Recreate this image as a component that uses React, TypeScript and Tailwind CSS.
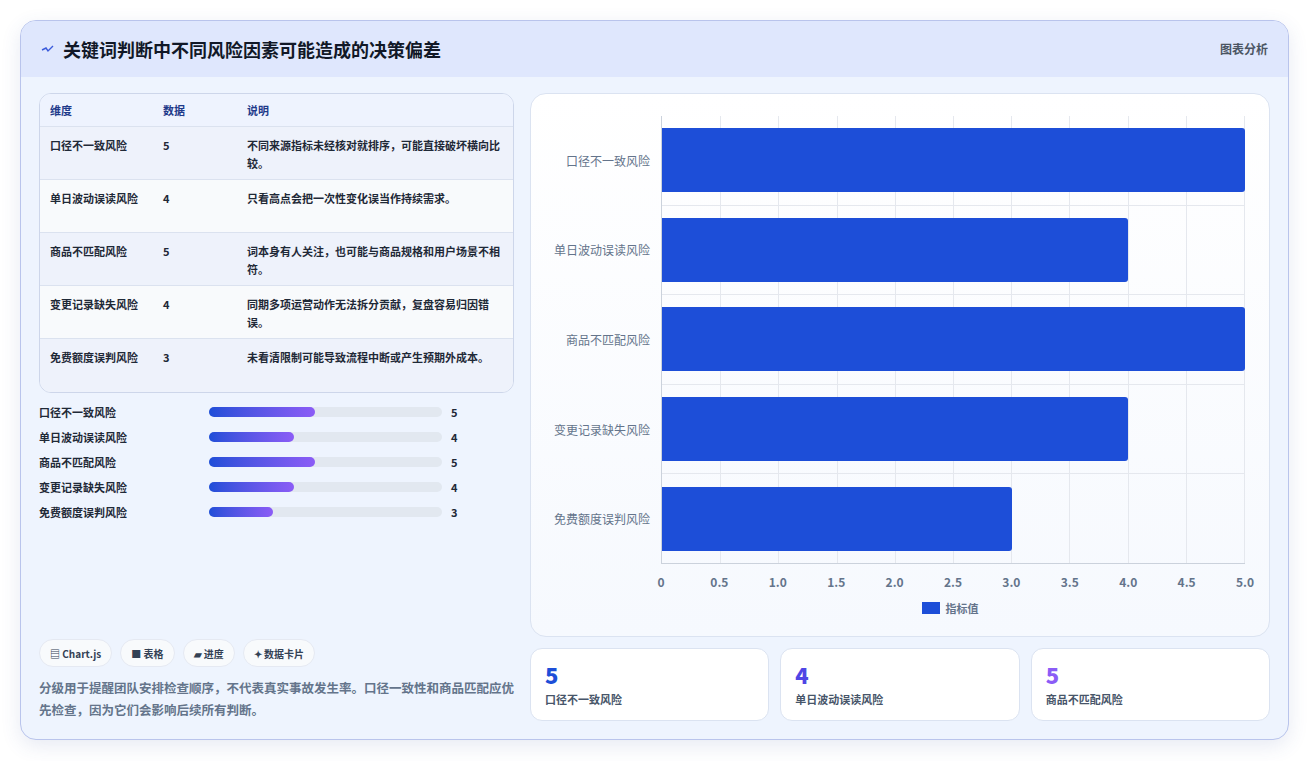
import React from "react";

const rows = [
  { n: "口径不一致风险", v: 5, d: "不同来源指标未经核对就排序，可能直接破坏横向比较。" },
  { n: "单日波动误读风险", v: 4, d: "只看高点会把一次性变化误当作持续需求。" },
  { n: "商品不匹配风险", v: 5, d: "词本身有人关注，也可能与商品规格和用户场景不相符。" },
  { n: "变更记录缺失风险", v: 4, d: "同期多项运营动作无法拆分贡献，复盘容易归因错误。" },
  { n: "免费额度误判风险", v: 3, d: "未看清限制可能导致流程中断或产生预期外成本。" },
];
const ticks = ["0", "0.5", "1.0", "1.5", "2.0", "2.5", "3.0", "3.5", "4.0", "4.5", "5.0"];

export default function App() {
  return (
    <div className="w-[1309px] h-[761px] bg-white p-[20px] pb-0" style={{ fontFamily: '"Noto Sans CJK SC", "Noto Sans", sans-serif' }}>
      <div className="w-[1269px] h-[720px] rounded-[16px] border border-[#b9c4ec] bg-[#eef4fe] overflow-hidden shadow-[0_6px_20px_rgba(60,80,160,0.12)] flex flex-col">
        <div className="h-[56px] shrink-0 bg-[#dfe7fd] flex items-center justify-between px-[20px]">
          <div className="flex items-center gap-[8px]">
            <svg width="14" height="10" viewBox="0 0 14 10"><path d="M1 6 L5 4 L7 7 L12 2" stroke="#3b5bdb" strokeWidth="1.4" fill="none" /></svg>
            <span className="text-[18px] font-bold text-[#111827]">关键词判断中不同风险因素可能造成的决策偏差</span>
          </div>
          <span className="text-[12px] font-semibold text-[#4b5563]">图表分析</span>
        </div>
        <div className="flex-1 flex gap-[16px] px-[18px] pt-[16px] pb-[18px]">
          <div className="w-[475px] flex flex-col">
            <div className="rounded-[12px] border border-[#cdd6ea] overflow-hidden bg-[#f7faff] text-[11px]">
              <div className="flex h-[33px] items-center bg-[#eef3fe] text-[#1e3a8a] font-semibold border-b border-[#dbe2ef]">
                <div className="w-[123px] pl-[10px]">维度</div>
                <div className="w-[84px]">数据</div>
                <div>说明</div>
              </div>
              {rows.map((r, i) => (
                <div key={i} className={`flex h-[53px] pt-[9px] leading-[18px] text-[#1f2937] ${i < 4 ? "border-b border-[#dbe2ef]" : ""} ${i % 2 ? "bg-[#f8fafc]" : "bg-[#eef2fb]"}`}>
                  <div className="w-[123px] pl-[10px] pr-[8px] font-semibold">{r.n}</div>
                  <div className="w-[84px] font-semibold">{r.v}</div>
                  <div className="flex-1 pr-[12px] font-semibold">{r.d}</div>
                </div>
              ))}
            </div>
            <div className="mt-[10px] flex flex-col gap-[7px]">
              {rows.map((r, i) => (
                <div key={i} className="flex items-center h-[18px] text-[11px] font-semibold text-[#1f2937]">
                  <div className="w-[170px]">{r.n}</div>
                  <div className="w-[233px] h-[10px] rounded-full bg-[#e2e8f0]">
                    <div className="h-full rounded-full bg-gradient-to-r from-[#1d4ed8] to-[#8b5cf6]" style={{ width: `${(r.v / 11) * 100}%` }} />
                  </div>
                  <div className="ml-[9px] font-bold">{r.v}</div>
                </div>
              ))}
            </div>
            <div className="flex-1" />
            <div className="flex gap-[8px] text-[10px] font-semibold text-[#334155]">
              {["▤ Chart.js", "■ 表格", "▰ 进度", "✦ 数据卡片"].map((c) => (
                <span key={c} className="h-[28px] px-[10px] rounded-full bg-[#f8fafc] border border-[#e5e9f2] flex items-center">{c}</span>
              ))}
            </div>
            <p className="mt-[10px] text-[12.5px] leading-[22px] font-semibold text-[#64748b]">分级用于提醒团队安排检查顺序，不代表真实事故发生率。口径一致性和商品匹配应优先检查，因为它们会影响后续所有判断。</p>
          </div>
          <div className="flex-1 flex flex-col gap-[11px]">
            <div className="h-[544px] rounded-[16px] border border-[#dbe3f1] bg-gradient-to-b from-white to-[#f6f9fe] pt-[22px] pl-[14px] pr-[24px] flex flex-col">
              <div className="flex h-[448px]">
                <div className="w-[116px] flex flex-col text-[12px] text-[#64748b]">
                  {rows.map((r) => (
                    <div key={r.n} className="flex-1 flex items-center justify-end pr-[11px]">{r.n}</div>
                  ))}
                </div>
                <div className="flex-1 relative border-l border-b border-[#cbd2dc]">
                  <div className="absolute inset-0 flex justify-between">
                    {ticks.map((t, i) => (<div key={t} className={`w-px h-full ${i === 0 ? "" : "bg-[#e5e8ee]"}`} />))}
                  </div>
                  <div className="absolute inset-0 flex flex-col">
                    {rows.map((r, i) => (
                      <div key={i} className={`flex-1 flex items-center ${i > 0 ? "border-t border-[#e5e8ee]" : ""}`}>
                        <div className="h-[64px] bg-[#1d4ed8] rounded-r-[3px]" style={{ width: `${(r.v / 5) * 100}%` }} />
                      </div>
                    ))}
                  </div>
                </div>
              </div>
              <div className="flex pl-[116px] mt-[9px]">
                <div className="flex-1 relative h-[16px] text-[12px] text-[#64748b] font-semibold">
                  {ticks.map((t, i) => (
                    <span key={t} className="absolute -translate-x-1/2" style={{ left: `${i * 10}%` }}>{t}</span>
                  ))}
                </div>
              </div>
              <div className="flex justify-center items-center gap-[6px] mt-[11px] pl-[110px] text-[11px] font-semibold text-[#64748b]">
                <span className="w-[18px] h-[12px] bg-[#1d4ed8]" /> 指标值
              </div>
            </div>
            <div className="flex gap-[11px] h-[73px]">
              {[["5", "#1d4ed8"], ["4", "#4f46e5"], ["5", "#8b5cf6"]].map(([v, c], i) => (
                <div key={i} className="flex-1 rounded-[12px] border border-[#dbe3f1] bg-white px-[14px] pt-[12px]">
                  <div className="text-[22px] font-extrabold leading-[26px]" style={{ color: c }}>{v}</div>
                  <div className="mt-[4px] text-[11px] font-semibold text-[#475569]">{rows[i].n}</div>
                </div>
              ))}
            </div>
          </div>
        </div>
      </div>
    </div>
  );
}
